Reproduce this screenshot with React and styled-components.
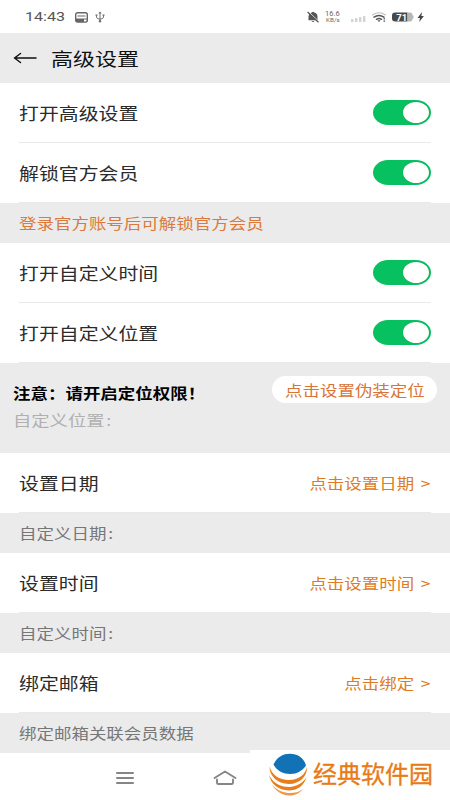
import React from "react";
import styled, { createGlobalStyle } from "styled-components";

const GlobalStyle = createGlobalStyle`
  * { box-sizing: border-box; }
  body {
    margin: 0;
    background: #fff;
    font-family: "Noto Sans CJK SC", "Noto Sans", sans-serif;
  }
`;

const Screen = styled.div`
  position: relative;
  width: 450px;
  height: 800px;
  overflow: hidden;
  background: #fff;
  display: flex;
  flex-direction: column;
`;

/* Wide lettering: the glyphs are stretched sideways from one edge. */
const Label = styled.span`
  display: block;
  white-space: nowrap;
  font-size: ${(p) => p.$size || 16.5}px;
  line-height: 24px;
  font-weight: ${(p) => p.$weight || 400};
  color: ${(p) => p.$color || "#2b2b2b"};
  transform: scaleX(${(p) => p.$stretch || 1.205});
  transform-origin: ${(p) => p.$from || "left"} center;
`;

const Chevron = styled.span`
  margin-left: 5.5px;
`;

const Colon = styled.span`
  margin-left: 1.5px;
`;

const StatusBar = styled.div`
  height: 33px;
  flex: none;
  display: flex;
  align-items: center;
  justify-content: space-between;
  padding: 1px 24px 0 25px;
`;

const StatusGroup = styled.div`
  display: flex;
  align-items: center;
`;

const Clock = styled.span`
  width: 50px;
  font: 13.3px/16px Roboto, sans-serif;
  color: #555;

  span {
    display: inline-block;
    transform: scaleX(1.21);
    transform-origin: left center;
  }
`;

const Speed = styled.span`
  width: 17px;
  margin: 0 9px 0 5px;
  display: flex;
  flex-direction: column;
  align-items: center;
  font-family: Roboto, sans-serif;
  color: #666;
  white-space: nowrap;
`;

const SpeedLine = styled.span`
  font-size: ${(p) => p.$size}px;
  line-height: 6.5px;
  height: 6.5px;
  transform: scaleX(1.15);
`;

const Header = styled.header`
  height: 50px;
  flex: none;
  display: flex;
  align-items: center;
  gap: 13px;
  padding-left: 13px;
  background: #ebebeb;
`;

const Row = styled.div`
  height: 60px;
  flex: none;
  margin: 0 19px;
  display: flex;
  align-items: center;
  justify-content: space-between;
  border-bottom: 1px solid #e9e9e9;
`;

const Band = styled.div`
  height: 40px;
  flex: none;
  display: flex;
  align-items: center;
  padding: 0 19px;
  background: #ebebeb;
`;

const Notice = styled.section`
  height: 90px;
  flex: none;
  display: flex;
  justify-content: space-between;
  padding: 13px 13px 0;
  background: #ebebeb;
`;

const NoticeText = styled.div`
  padding-top: 5px;
  display: flex;
  flex-direction: column;
  gap: 2px;
`;

const Pill = styled.button`
  width: 165px;
  height: 27px;
  border: 0;
  border-radius: 14px;
  padding: 0 0 0 13px;
  background: #fff;
  display: flex;
  align-items: center;
  font-family: inherit;
`;

const Toggle = styled.button`
  width: 58px;
  height: 25px;
  border: 0;
  border-radius: 15px / 12.5px;
  padding: 0 2px 0 0;
  background: #07c160;
  display: flex;
  justify-content: flex-end;
  align-items: center;
`;

const Knob = styled.span`
  width: 26px;
  height: 21px;
  border-radius: 50%;
  background: #fff;
  box-shadow: 0 0 1px #26784f;
`;

const NavBar = styled.nav`
  height: 47px;
  flex: none;
  display: flex;
  align-items: center;
  gap: 78px;
  padding: 2px 0 0 115px;
`;

const Brand = styled.div`
  position: absolute;
  right: 0;
  bottom: 0;
  width: 200px;
  height: 50px;
  padding-left: 18px;
  background: #fff;
  display: flex;
  align-items: center;
  gap: 3px;
`;

const BrandName = styled.span`
  font-size: 24px;
  line-height: 46px;
  padding-bottom: 4px;
  font-weight: 400;
  color: #e87b16;
  white-space: nowrap;
  -webkit-text-stroke: 0.3px #e87b16;
`;

const orange = "#de7b25";

function SwitchRow({ children }) {
  return (
    <Row>
      <Label>{children}</Label>
      <Toggle aria-label={children}><Knob /></Toggle>
    </Row>
  );
}

function LinkRow({ title, action }) {
  return (
    <Row>
      <Label>{title}</Label>
      <Label $size={14.5} $color={orange} $from="right">{action}<Chevron>&gt;</Chevron></Label>
    </Row>
  );
}

function NoteBand({ children, color = "#777", colon = false }) {
  return (
    <Band>
      <Label $size={14.5} $color={color}>{children}{colon && <Colon>:</Colon>}</Label>
    </Band>
  );
}

function CardIcon() {
  return (
    <svg width="13" height="11" viewBox="0 0 13 11">
      <rect x=".7" y=".7" width="11.6" height="9.4" rx="1.8" fill="none" stroke="#666" strokeWidth="1.4" />
      <path d="M2.5 4h8M1 7h11" stroke="#666" strokeWidth="1.2" />
      <path d="M1 7h8v3H1z" fill="#666" />
    </svg>
  );
}

function UsbIcon() {
  return (
    <svg width="10" height="12" viewBox="0 0 10 12" fill="none" stroke="#707070" strokeWidth="1">
      <path d="M5 1v9M1.5 4v2.2Q1.5 8 5 8.2Q8.5 8 8.5 6V4" />
      <path d="M3.4 2.6L5 .4l1.6 2.2zM.5 3.4h2v1.4h-2zM7.5 3.4h2v1.4h-2z" fill="#707070" stroke="none" />
      <circle cx="5" cy="10.3" r="1.2" fill="#707070" stroke="none" />
    </svg>
  );
}

function StatusIcons() {
  return (
    <svg width="76" height="14" viewBox="0 0 76 14">
      <g fill="#d3d3d3">
        <rect x="1" y="9" width="2.4" height="3" rx=".5" />
        <rect x="5" y="8" width="2.4" height="4" rx=".5" />
        <rect x="9" y="7" width="2.4" height="5" rx=".5" />
        <rect x="13" y="6" width="2.4" height="6" rx=".5" />
      </g>
      <g fill="none" strokeLinecap="round">
        <path d="M22.500 5q6.500-4.500 13 0" stroke="#bdbdbd" strokeWidth="1.1" />
        <path d="M24 7.200q5-3.400 10 0M26.500 9.300q2.500-1.800 5 0" stroke="#555" strokeWidth="1.500" />
      </g>
      <path d="M27.300 10.300h3.400L29 12zM33.500 8.300h1.600v1.200h-1.600zM33.500 10.600h1.600v1.200h-1.600z" fill="#555" />
      <path d="M45 2.500h12.500v9H45q-3 0-3-3v-3q0-3 3-3z" fill="#484848" />
      <path d="M57.500 2.500H60q2.500 0 2.500 3h1v3h-1q0 3-2.500 3h-2.500z" fill="#b7b7b7" />
      <text x="46.200" y="10.500" fontFamily="Roboto, sans-serif" fontWeight="700" fontSize="9.500" fill="#fff" textLength="11" lengthAdjust="spacingAndGlyphs">71</text>
      <path d="M72 2l-4.500 6h2.500l-.8 4 4.700-6h-2.600z" fill="#444" />
    </svg>
  );
}

function BellOffIcon() {
  return (
    <svg width="12" height="12" viewBox="0 0 12 12">
      <path d="M1.500 9.200V5.500Q2 2 4.800 1.500Q6 0 7.200 1.500Q10.300 2.200 10.500 5.500V9.200zM4.500 10h3Q6 12.200 4.500 10z" fill="#555" />
      <path d="M1.800 .8L11.800 10.500" stroke="#fff" strokeWidth="1" />
      <path d="M.6 1L11.500 11.300" stroke="#555" strokeWidth="1.200" />
    </svg>
  );
}

function BackIcon() {
  return (
    <svg width="25" height="14" viewBox="0 0 25 14" fill="none" stroke="#111" strokeWidth="1.5" strokeLinecap="round" strokeLinejoin="round">
      <path d="M7.500 2.500L1.500 7l6 4.500M1.500 7H23" />
    </svg>
  );
}

function BrandLogo() {
  return (
    <svg width="42" height="44" viewBox="0 0 42 44">
      <path d="M5.500 11.500C9 4 15 .8 22 .8C30 1 36 5 38 12.500C34 18 29 21 22.500 21C15 21 9 18 5.500 11.500z" fill="#1272b6" />
      <g fill="#e77e1b">
        <path d="M1.500 13.500C4 22 11 27 21 27C31 26.500 37 22 39 14C39.500 23 32 31 21 31C9 30.500 1.500 23 1.500 13.500z" />
        <path d="M1 22C5 30 12 34 21 34C29 33.500 35 30 38.500 24C36 33 29 37.500 21 37.500C10 37 3 31 1 22z" />
        <path d="M4 32C10 38 16 40 22 40C27 40 31 39 35 36C31 41 26 42.500 21 42.500C13 42 8 38 4 32z" opacity=".8" />
      </g>
    </svg>
  );
}

export default function App() {
  return (
    <>
      <GlobalStyle />
      <Screen>
        <StatusBar>
          <StatusGroup>
            <Clock><span>14:43</span></Clock>
            <CardIcon />
            <svg width="7" height="1" />
            <UsbIcon />
          </StatusGroup>
          <StatusGroup>
            <BellOffIcon />
            <Speed>
              <SpeedLine $size={6.5}>16.6</SpeedLine>
              <SpeedLine $size={5.5}>KB/s</SpeedLine>
            </Speed>
            <StatusIcons />
          </StatusGroup>
        </StatusBar>
        <Header>
          <BackIcon />
          <Label $size={18.3} $color="#111">高级设置</Label>
        </Header>
        <SwitchRow>打开高级设置</SwitchRow>
        <SwitchRow>解锁官方会员</SwitchRow>
        <NoteBand color="#db7a3b">登录官方账号后可解锁官方会员</NoteBand>
        <SwitchRow>打开自定义时间</SwitchRow>
        <SwitchRow>打开自定义位置</SwitchRow>
        <Notice>
          <NoticeText>
            <Label $size={14.5} $weight={700} $color="#000">注意：请开启定位权限！</Label>
            <Label $size={15.2} $color="#b0b0b0">自定义位置<Colon>:</Colon></Label>
          </NoticeText>
          <Pill><Label $size={14.5} $color="#d8743a">点击设置伪装定位</Label></Pill>
        </Notice>
        <LinkRow title="设置日期" action="点击设置日期" />
        <NoteBand colon>自定义日期</NoteBand>
        <LinkRow title="设置时间" action="点击设置时间" />
        <NoteBand colon>自定义时间</NoteBand>
        <LinkRow title="绑定邮箱" action="点击绑定" />
        <NoteBand>绑定邮箱关联会员数据</NoteBand>
        <NavBar>
          <svg width="20" height="14" viewBox="0 0 20 14" stroke="#858585" strokeWidth="2" strokeLinecap="round">
            <path d="M2 2h16M2 7h16M2 12h16" />
          </svg>
          <svg width="24" height="16" viewBox="0 0 24 16" fill="none" stroke="#858585" strokeWidth="1.900" strokeLinecap="round" strokeLinejoin="round">
            <path d="M1.500 8L12 1.500L22.500 8M4 9.500V13q0 1 1.500 1h13q1.500 0 1.500-1V9.500" />
          </svg>
        </NavBar>
        <Brand>
          <BrandLogo />
          <BrandName>经典软件园</BrandName>
        </Brand>
      </Screen>
    </>
  );
}
